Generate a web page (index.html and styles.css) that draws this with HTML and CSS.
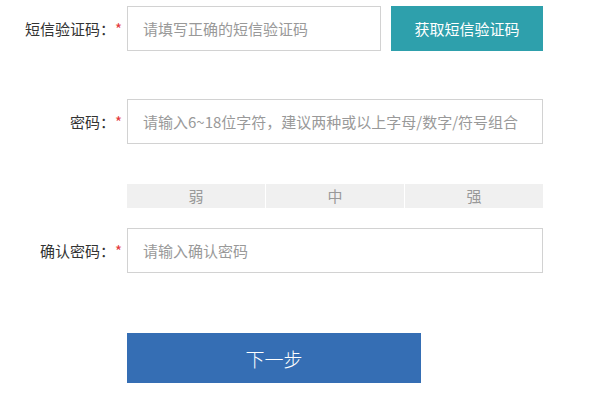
FILE: index.html
```html
<!DOCTYPE html>
<html lang="zh-CN">
<head>
<meta charset="utf-8">
<link rel="stylesheet" href="styles.css">
</head>
<body>
<form class="form">
  <div class="row">
    <label class="label">短信验证码：<span class="star">*</span></label>
    <input class="input input-short" type="text" placeholder="请填写正确的短信验证码">
    <button type="button" class="btn-code">获取短信验证码</button>
  </div>
  <div class="row row-pwd">
    <label class="label">密码：<span class="star">*</span></label>
    <input class="input input-long" type="password" placeholder="请输入6~18位字符，建议两种或以上字母/数字/符号组合">
  </div>
  <div class="row row-strength">
    <div class="label"></div>
    <div class="strength">
      <span class="seg">弱</span>
      <span class="seg">中</span>
      <span class="seg">强</span>
    </div>
  </div>
  <div class="row row-confirm">
    <label class="label">确认密码：<span class="star">*</span></label>
    <input class="input input-long" type="password" placeholder="请输入确认密码">
  </div>
  <div class="row row-submit">
    <div class="label"></div>
    <button type="button" class="btn-next">下一步</button>
  </div>
</form>
</body>
</html>
```

FILE: styles.css
```css
html, body {
  margin: 0;
  padding: 0;
  background: #fff;
}
body {
  font-family: "Microsoft YaHei", "Noto Sans CJK SC", "Noto Sans", sans-serif;
  color: #333;
}
.form {
  padding-top: 6px;
  display: flex;
  flex-direction: column;
}
.row {
  display: flex;
  align-items: center;
}
.label {
  width: 127px;
  flex: none;
  box-sizing: border-box;
  text-align: right;
  padding-right: 6px;
  font-size: 15px;
  color: #333;
  white-space: nowrap;
}
.star {
  color: #e4393c;
  display: inline-block;
  width: 6px;
  text-align: left;
}
.input {
  box-sizing: border-box;
  height: 45px;
  border: 1px solid #d2d2d2;
  padding: 0 15px;
  font-size: 15px;
  font-family: inherit;
  color: #333;
  outline: none;
  margin: 0;
}
.input::placeholder {
  color: #999;
}
.input-short {
  width: 254px;
}
.input-long {
  width: 416px;
}
.btn-code {
  margin: 0 0 0 10px;
  width: 152px;
  height: 45px;
  border: none;
  background: #2ea0ac;
  color: #fff;
  font-size: 15px;
  font-family: inherit;
  padding: 0;
}
.row-pwd {
  margin-top: 48px;
}
.row-strength {
  margin-top: 40px;
}
.strength {
  width: 416px;
  display: grid;
  grid-template-columns: 1fr 1fr 1fr;
  gap: 1px;
}
.seg {
  height: 24px;
  line-height: 24px;
  background: #f0f0f0;
  color: #999;
  font-size: 15px;
  text-align: center;
}
.row-confirm {
  margin-top: 20px;
}
.row-submit {
  margin-top: 60px;
}
.btn-next {
  margin: 0;
  width: 294px;
  height: 50px;
  border: none;
  background: #356eb4;
  color: #fff;
  font-size: 19px;
  font-weight: 300;
  font-family: inherit;
  padding: 0;
}
```
